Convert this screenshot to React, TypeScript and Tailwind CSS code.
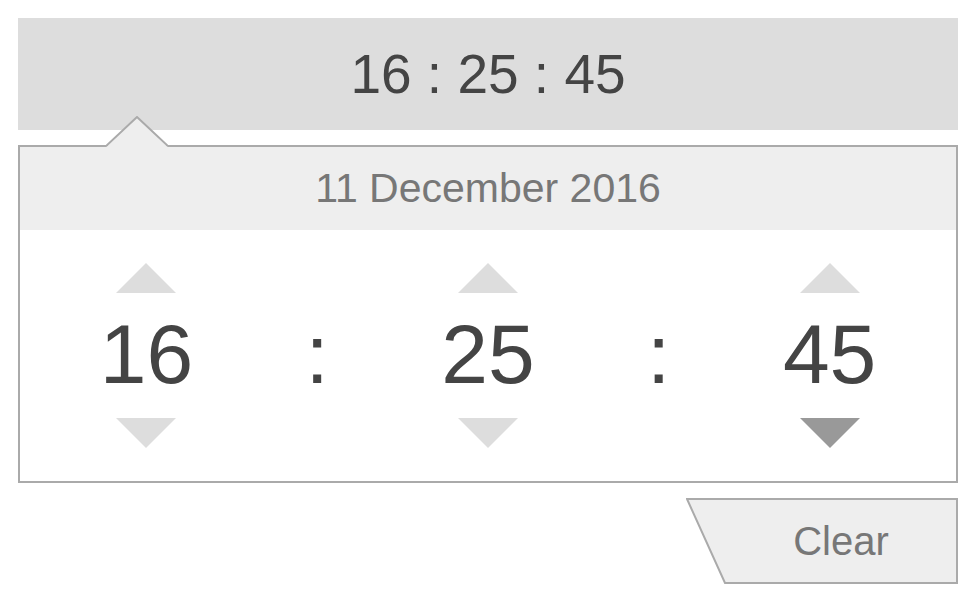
import React from "react";

const FONT = { fontFamily: '"Liberation Sans", Arial, sans-serif' };

function Triangle({ dir, color }: { dir: "up" | "down"; color: string }) {
  return (
    <svg width="60" height="30" viewBox="0 0 60 30" className="block">
      {dir === "up" ? (
        <polygon points="30,0 60,30 0,30" fill={color} />
      ) : (
        <polygon points="0,0 60,0 30,30" fill={color} />
      )}
    </svg>
  );
}

function Spinner({ value, downColor = "#dddddd" }: { value: string; downColor?: string }) {
  return (
    <div className="flex flex-col items-center">
      <Triangle dir="up" color="#dddddd" />
      <div className="mt-[19px] h-[84px] text-[84px] leading-[84px] text-[#444444]">{value}</div>
      <div className="mt-[22px]">
        <Triangle dir="down" color={downColor} />
      </div>
    </div>
  );
}

function Colon() {
  return (
    <div className="flex flex-col items-center">
      <div className="h-[30px]" />
      <div className="mt-[19px] h-[84px] text-[84px] leading-[84px] text-[#444444]">:</div>
      <div className="mt-[22px] h-[30px]" />
    </div>
  );
}

export default function App() {
  return (
    <div className="min-h-screen bg-white p-[18px]" style={FONT}>
      <div className="flex h-[112px] items-center justify-center bg-[#dddddd] text-[55px] leading-none text-[#444444]">
        16 : 25 : 45
      </div>

      <div className="relative mt-[15px] border-2 border-[#aaaaaa]">
        {/* little pointer up to the input */}
        <svg
          width="62"
          height="32"
          viewBox="0 0 62 32"
          className="absolute left-[86px] top-[-31px]"
        >
          <polygon points="0,31 31,1 62,31" fill="#eeeeee" />
          <polyline points="0,30 31,1 62,30" fill="none" stroke="#aaaaaa" strokeWidth="2" />
        </svg>

        <div className="flex h-[83px] items-center justify-center bg-[#eeeeee] text-[41px] leading-none text-[#777777]">
          11 December 2016
        </div>

        <div className="grid grid-cols-5 px-[41px] pb-[33px] pt-[33px]">
          <Spinner value="16" />
          <Colon />
          <Spinner value="25" />
          <Colon />
          <Spinner value="45" downColor="#999999" />
        </div>
      </div>

      <div className="mt-[15px] flex justify-end">
        <button className="relative flex h-[86px] w-[272px] items-center justify-center pl-[38px] text-[40px] leading-none text-[#777777]">
          <svg
            width="272"
            height="86"
            viewBox="0 0 272 86"
            className="absolute inset-0"
          >
            <polygon
              points="1,1 271,1 271,85 39,85"
              fill="#eeeeee"
              stroke="#aaaaaa"
              strokeWidth="2"
            />
          </svg>
          <span className="relative">Clear</span>
        </button>
      </div>
    </div>
  );
}
